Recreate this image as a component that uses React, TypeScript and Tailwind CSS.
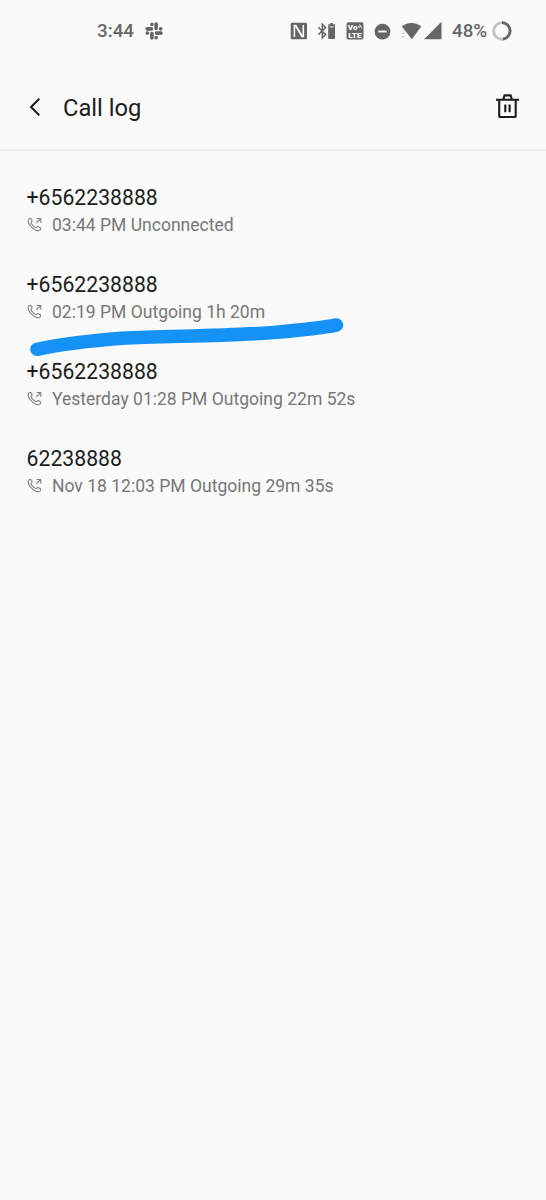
type Call = {
  id: number;
  number: string;
  detail: string;
};

const calls: Call[] = [
  { id: 1, number: '+6562238888', detail: '03:44 PM Unconnected' },
  { id: 2, number: '+6562238888', detail: '02:19 PM Outgoing 1h 20m' },
  { id: 3, number: '+6562238888', detail: 'Yesterday 01:28 PM Outgoing 22m 52s' },
  { id: 4, number: '62238888', detail: 'Nov 18 12:03 PM Outgoing 29m 35s' },
];

function SlackIcon() {
  return (
    <svg width={18} height={18} viewBox="0 0 18 18" fill="none" stroke="currentColor" strokeWidth={3.6} strokeLinecap="round" className="ml-[11px]" aria-hidden>
      <path d="M11.1 2.1v4.4M2.1 6.9h4.4M6.9 11.5v4.4M11.5 11.1h4.4M6.9 2.3v.2M15.6 6.9h.1M11.1 15.6v.1M2.3 11.1h.2" />
    </svg>
  );
}

function NfcIcon() {
  return (
    <svg width={18} height={18} viewBox="0 0 18 18" fill="none" className="ml-[127px]" aria-hidden>
      <rect x="0.7" y="0.7" width="16.3" height="16.6" rx="1.3" fill="currentColor" />
      <path d="M4.4 15V3.6h1.4l6 9.8M13.3 3v11.4h-1.4L6 4.6" stroke="#fafafa" strokeWidth={1.6} />
    </svg>
  );
}

function BluetoothIcon() {
  return (
    <svg width={19} height={18} viewBox="0 0 19 18" fill="none" className="ml-[9px]" aria-hidden>
      <path d="M1.3 5.2l7.4 7.4-3.4 3.2V2.2l3.4 3.2-7.4 7.4" stroke="currentColor" strokeWidth={1.5} />
      <path d="M13.3 1h2.6v1.2h1.3q.8 0 .8.8v13.3q0 .8-.8.8h-5.2q-.8 0-.8-.8V3q0-.8.8-.8h1.3z" fill="currentColor" />
      <path d="M12.7 4.9h3.8" stroke="#fafafa" strokeWidth={1} />
    </svg>
  );
}

function VolteIcon() {
  return (
    <svg width={18} height={18} viewBox="0 0 18 18" className="ml-2.5" aria-hidden>
      <rect x="0.5" y="0.3" width="17" height="17.3" rx="1.8" fill="currentColor" />
      <text x="1.8" y="7.7" fontSize="6.8" fontWeight="900" fill="#fafafa" textLength="9.6" lengthAdjust="spacingAndGlyphs">Vo</text>
      <path d="M12 4.8q1-1.5 1.5 1.2M13 2.6q2.3.3 2.4 3.6" stroke="#fafafa" fill="none" />
      <text x="2.2" y="15.8" fontSize="6.8" fontWeight="900" fill="#fafafa" textLength="13.6" lengthAdjust="spacingAndGlyphs">LTE</text>
    </svg>
  );
}

function DndIcon() {
  return (
    <svg width={17} height={17} viewBox="0 0 17 17" className="ml-[10px]" aria-hidden>
      <circle cx="8.5" cy="8.6" r="7.9" fill="currentColor" />
      <path d="M4.3 8.5h8.4" stroke="#fafafa" strokeWidth={1.9} />
    </svg>
  );
}

function SignalIcons() {
  return (
    <svg width={42} height={20} viewBox="0 0 42 20" fill="currentColor" className="ml-[10px]" aria-hidden>
      <path d="M.7 5.300Q10.500-1.700 20.400 5.300L10.800 18.200z" />
      <path d="M.7 13l1.600-1.800L3.900 13zM.7 15.200l1.600 1.800 1.600-1.800z" opacity=".4" />
      <path d="M40.500.7v17.500H23.100z" />
    </svg>
  );
}

function BatteryRing() {
  return (
    <svg width={20} height={20} viewBox="0 0 20 20" fill="none" strokeWidth={2.8} className="ml-[5px]" aria-hidden>
      <circle cx="10" cy="10" r="8.3" stroke="#c2c2c2" />
      <path d="M10 1.700a8.300 8.300 0 0 1 1 16.500" stroke="#666666" />
    </svg>
  );
}

function OutgoingIcon() {
  return (
    <svg width={16} height={16} viewBox="0 0 16 16" fill="none" stroke="#808080" strokeWidth={1.1} strokeLinecap="round" strokeLinejoin="round" className="mr-[9.4px] shrink-0" aria-hidden>
      <path d="M2 1.800c1-.9 2-.4 2.700.8.600 1.100.4 1.800-.4 2.600-.5.600.5 2.200 1.800 3.500s2.800 2.100 3.400 1.600c.9-.8 1.700-.9 2.800-.2 1.400.8 1.700 1.900.7 2.900-1.300 1.400-3.700 1.100-7-1.600C2.400 8.600-.2 4.200 2 1.800z" />
      <path d="M9.3 5.900L13.700 1.500M9.600 1.500h4.200v4.200" strokeLinecap="butt" />
    </svg>
  );
}

function StatusBar() {
  return (
    <div className="flex h-[62px] items-center pl-[97px] text-[18.8px] font-medium text-[#666666]">
      <span className="w-[37px]">3:44</span>
      <SlackIcon />
      <NfcIcon />
      <BluetoothIcon />
      <VolteIcon />
      <DndIcon />
      <SignalIcons />
      <span className="ml-[9px] w-[35px]">48%</span>
      <BatteryRing />
    </div>
  );
}

function Header() {
  return (
    <header className="flex h-[89px] items-center border-b-2 border-[#efefef] pr-[26px] pl-7 text-[#1c1c1c]">
      <button type="button" aria-label="Back">
        <svg width={14} height={20} viewBox="0 0 14 20" fill="none" stroke="currentColor" strokeWidth={2} aria-hidden>
          <path d="M11.3 2.700L3 11l8.300 8.300" />
        </svg>
      </button>
      <h1 className="ml-[21px] flex-1 pt-1 text-[23.7px] leading-7">Call log</h1>
      <button type="button" aria-label="Delete">
        <svg width={26} height={28} viewBox="0 0 26 28" fill="none" stroke="currentColor" strokeWidth={2.1} aria-hidden>
          <path d="M2 7.800h23M5.200 7.800v16.400q0 .8.800.8h14.900q.8 0 .8-.8V7.800M9.300 7.500l1.200-4.100h6.200l1.200 4.100M11.300 12.600v7.600M15.600 12.600v7.600" strokeLinejoin="round" />
        </svg>
      </button>
    </header>
  );
}

function CallRow({ call }: { call: Call }) {
  return (
    <li className="h-[87px] pl-[26.6px]">
      <p className="text-[21.2px] leading-7 text-[#1c1c1c]">{call.number}</p>
      <p className="flex h-[26px] items-center text-[17.54px] text-[#777777]">
        <OutgoingIcon />
        <span>{call.detail}</span>
      </p>
    </li>
  );
}

export default function App() {
  return (
    <div className="relative min-h-[1200px] w-full bg-[#fafafa] font-[Roboto,sans-serif]">
      <StatusBar />
      <Header />
      <ul className="pt-[33px]">
        {calls.map((call) => (
          <CallRow key={call.id} call={call} />
        ))}
      </ul>
      {/* marker stroke under the long call */}
      <svg width={330} height={46} viewBox="24 314 330 46" fill="none" className="pointer-events-none absolute top-[314px] left-6" aria-hidden>
        <path d="M37 349.300C62 344 93 340.500 122 338.300C165 336 220 336.300 271 332.700C294 330.700 316 329 336.500 325" stroke="#1592f5" strokeWidth={13.5} strokeLinecap="round" strokeLinejoin="round" />
      </svg>
    </div>
  );
}
